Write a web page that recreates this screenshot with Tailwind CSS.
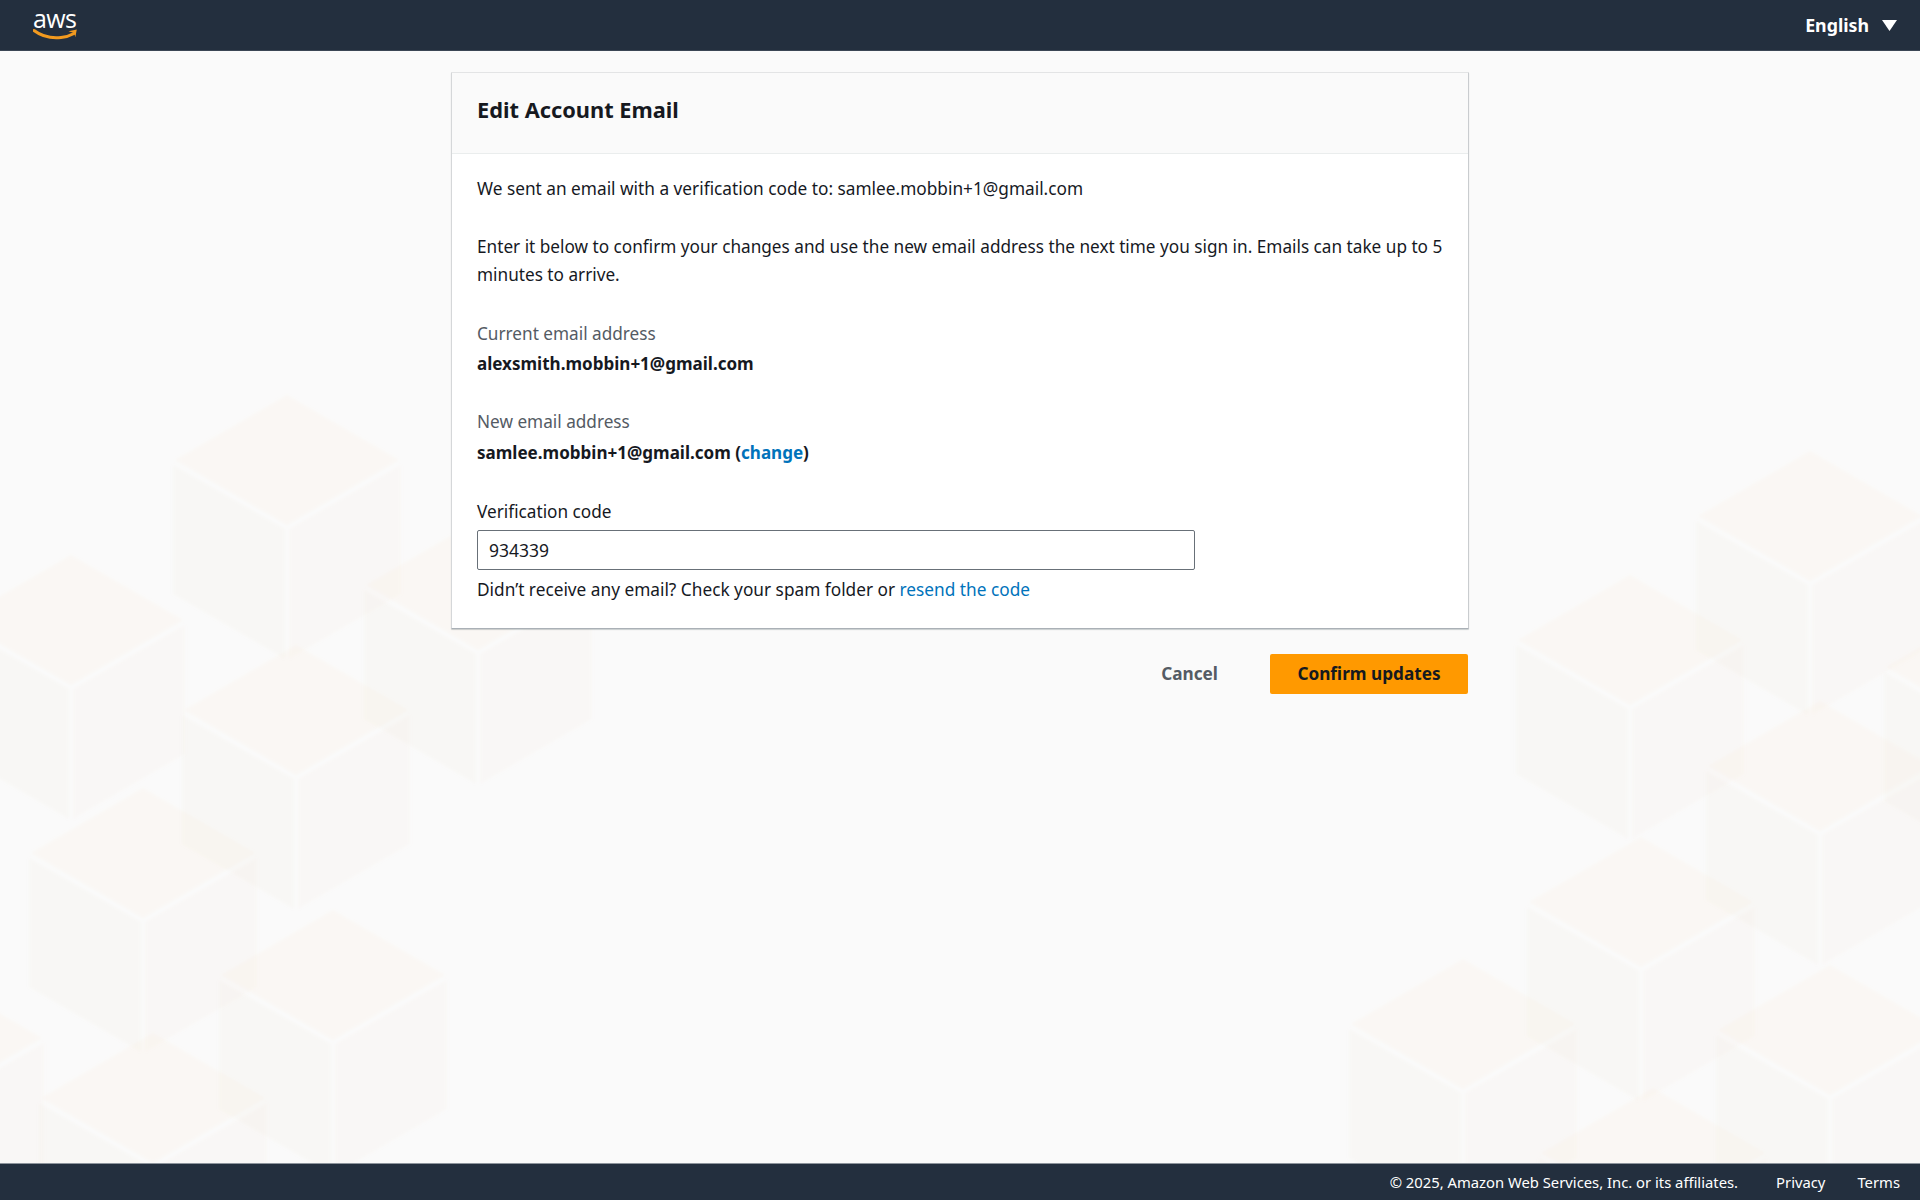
<!DOCTYPE html>
<html lang="en">
<head>
    <meta charset="UTF-8">
    <meta name="viewport" content="width=device-width, initial-scale=1.0">
    <title>Edit Account Email</title>
    <script src="https://cdn.jsdelivr.net/npm/@tailwindcss/browser@4"></script>
</head>
<body class="h-[1200px] flex flex-col overflow-hidden bg-[#fafafa] font-['Noto_Sans',sans-serif] text-[17.2px] leading-[28px] text-[#16191f]">

    <!-- Top bar -->
    <header class="relative z-10 h-[51px] shrink-0 flex items-center justify-between bg-[#232f3e] border-b border-[#3b4654] pl-[33px] pr-[23px]">
        <div class="flex flex-col items-start w-[46px]">
            <span class="h-[20px] font-['Open_Sans',sans-serif] text-[25px] leading-[20px] tracking-[-0.6px] text-white">aws</span>
            <svg width="46" height="14" viewBox="0 0 46 14" fill="none">
                <path d="M1 2.5C9 8.5 19 10.5 28 9.5C33 9 37.500 7.500 41 5.500" stroke="#f29a1f" stroke-width="3" stroke-linecap="round"/>
                <path d="M35.500 3.200L43.800 1.500L42.300 9.300L41.200 4.900Z" fill="#f29a1f"/>
            </svg>
        </div>
        <div class="flex items-center gap-[13px]">
            <span class="text-[17.8px] font-bold text-white">English</span>
            <svg width="15" height="11" viewBox="0 0 15 11"><path d="M0 0H15L7.500 11Z" fill="#fff"/></svg>
        </div>
    </header>

    <main class="relative flex-1 pt-[21px]">
        <!-- Background cubes -->
        <svg class="absolute left-0 top-[-51px]" width="1920" height="1200" viewBox="0 0 1920 1200">
            <defs>
                <filter id="soft"><feGaussianBlur stdDeviation="1.500"/></filter>
                <g id="cube" filter="url(#soft)">
                    <path d="M0 -2L112 63L0 128L-112 63Z" fill="#f8d2ac" fill-opacity="0.07"/>
                    <path d="M-114 68L-2 132V262L-114 197Z" fill="#dcc8b0" fill-opacity="0.06"/>
                    <path d="M114 68L2 132V262L114 197Z" fill="#f5ccb8" fill-opacity="0.06"/>
                </g>
            </defs>
            <use href="#cube" x="287" y="397"/>
            <use href="#cube" x="71" y="557"/>
            <use href="#cube" x="478" y="522"/>
            <use href="#cube" x="296" y="647"/>
            <use href="#cube" x="143" y="790"/>
            <use href="#cube" x="333" y="912"/>
            <use href="#cube" x="153" y="1035"/>
            <use href="#cube" x="-70" y="975"/>
            <use href="#cube" x="1810" y="453"/>
            <use href="#cube" x="1630" y="577"/>
            <use href="#cube" x="1820" y="703"/>
            <use href="#cube" x="1641" y="839"/>
            <use href="#cube" x="1463" y="961"/>
            <use href="#cube" x="1830" y="967"/>
            <use href="#cube" x="1653" y="1090"/>
            <use href="#cube" x="1998" y="604"/>
        </svg>

        <div class="relative w-[1018px] mx-auto">
            <!-- Card -->
            <section class="bg-white border border-[#e3e4e5] border-b-[#aab0b6] border-l-[#d5d7d9] border-r-[#c9cccf] shadow-[0_1px_1px_rgba(0,28,36,0.2)] rounded-[1px]">
                <div class="h-[81px] flex items-center pb-[6px] px-[25px] bg-[#fafafa] border-b border-[#eaeded]">
                    <h1 class="text-[21.8px] font-bold text-[#16191f]">Edit Account Email</h1>
                </div>
                <div class="px-[25px] pt-[21px] pb-[24px]">
                    <p class="text-[17.25px]">We sent an email with a verification code to: samlee.mobbin+1@gmail.com</p>
                    <p class="mt-[30px]">Enter it below to confirm your changes and use the new email address the next time you sign in. Emails can take up to 5 minutes to arrive.</p>

                    <div class="mt-[31px] text-[#545b64]">Current email address</div>
                    <div class="mt-[2px] text-[17.05px] font-bold">alexsmith.mobbin+1@gmail.com</div>

                    <div class="mt-[30px] text-[#545b64]">New email address</div>
                    <div class="mt-[3px] text-[17.05px] font-bold">samlee.mobbin+1@gmail.com (<a href="#" class="text-[#0073bb]">change</a>)</div>

                    <label class="block mt-[31px] text-[#16191f]">Verification code</label>
                    <input type="text" value="934339" class="block mt-[4px] w-[718px] h-[40px] px-[11px] bg-white border border-[#687078] rounded-[2px] text-[17.5px] text-[#16191f]">
                    <p class="mt-[6px] text-[17.25px]">Didn’t receive any email? Check your spam folder or <a href="#" class="text-[#0073bb]">resend the code</a></p>
                </div>
            </section>

            <!-- Actions -->
            <div class="flex items-center justify-end gap-[52px] mt-[25px] pr-[1px]">
                <button class="font-bold text-[#545b64]">Cancel</button>
                <button class="w-[198px] h-[40px] bg-[#ff9900] rounded-[2px] font-bold text-[#16191f]">Confirm updates</button>
            </div>
        </div>
    </main>

    <!-- Footer -->
    <footer class="relative z-10 h-[37px] shrink-0 flex items-center justify-end gap-[32px] bg-[#232f3e] border-t border-[#8d949c] pr-[20px] text-[14.8px] text-white">
        <span class="mr-[6px]">© 2025, Amazon Web Services, Inc. or its affiliates.</span>
        <a href="#">Privacy</a>
        <a href="#">Terms</a>
    </footer>
</body>
</html>
